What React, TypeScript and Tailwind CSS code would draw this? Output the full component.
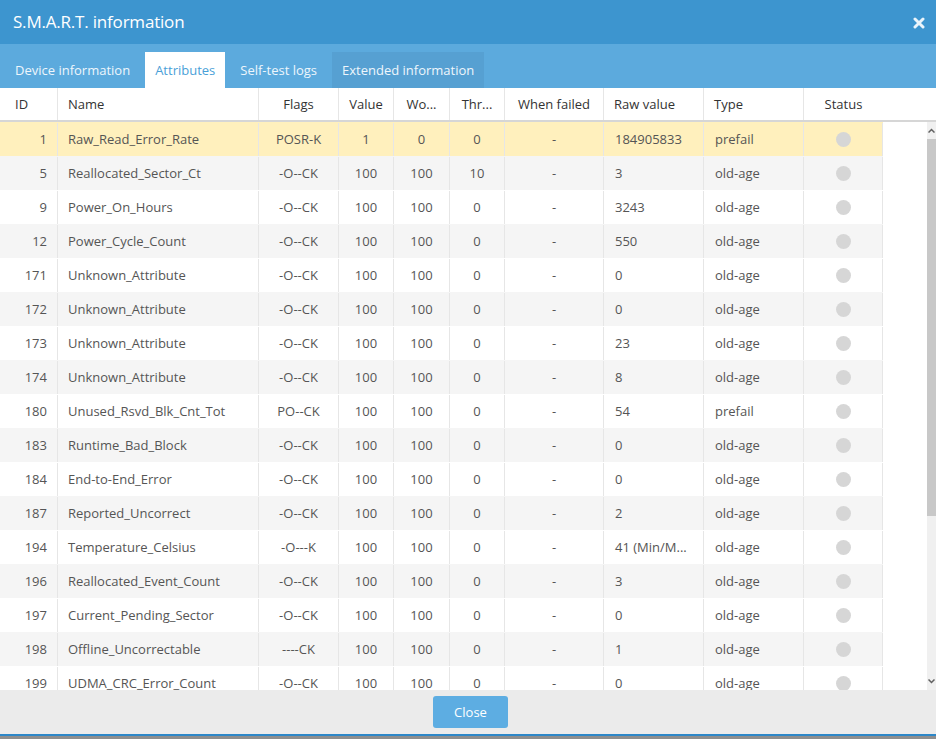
import React from 'react';

type Row = {
    id: number;
    name: string;
    flags: string;
    value: string;
    worst: string;
    thresh: string;
    raw: string;
    type: string;
};

const rows: Row[] = [
    { id: 1, name: 'Raw_Read_Error_Rate', flags: 'POSR-K', value: '1', worst: '0', thresh: '0', raw: '184905833', type: 'prefail' },
    { id: 5, name: 'Reallocated_Sector_Ct', flags: '-O--CK', value: '100', worst: '100', thresh: '10', raw: '3', type: 'old-age' },
    { id: 9, name: 'Power_On_Hours', flags: '-O--CK', value: '100', worst: '100', thresh: '0', raw: '3243', type: 'old-age' },
    { id: 12, name: 'Power_Cycle_Count', flags: '-O--CK', value: '100', worst: '100', thresh: '0', raw: '550', type: 'old-age' },
    { id: 171, name: 'Unknown_Attribute', flags: '-O--CK', value: '100', worst: '100', thresh: '0', raw: '0', type: 'old-age' },
    { id: 172, name: 'Unknown_Attribute', flags: '-O--CK', value: '100', worst: '100', thresh: '0', raw: '0', type: 'old-age' },
    { id: 173, name: 'Unknown_Attribute', flags: '-O--CK', value: '100', worst: '100', thresh: '0', raw: '23', type: 'old-age' },
    { id: 174, name: 'Unknown_Attribute', flags: '-O--CK', value: '100', worst: '100', thresh: '0', raw: '8', type: 'old-age' },
    { id: 180, name: 'Unused_Rsvd_Blk_Cnt_Tot', flags: 'PO--CK', value: '100', worst: '100', thresh: '0', raw: '54', type: 'prefail' },
    { id: 183, name: 'Runtime_Bad_Block', flags: '-O--CK', value: '100', worst: '100', thresh: '0', raw: '0', type: 'old-age' },
    { id: 184, name: 'End-to-End_Error', flags: '-O--CK', value: '100', worst: '100', thresh: '0', raw: '0', type: 'old-age' },
    { id: 187, name: 'Reported_Uncorrect', flags: '-O--CK', value: '100', worst: '100', thresh: '0', raw: '2', type: 'old-age' },
    { id: 194, name: 'Temperature_Celsius', flags: '-O---K', value: '100', worst: '100', thresh: '0', raw: '41 (Min/M...', type: 'old-age' },
    { id: 196, name: 'Reallocated_Event_Count', flags: '-O--CK', value: '100', worst: '100', thresh: '0', raw: '3', type: 'old-age' },
    { id: 197, name: 'Current_Pending_Sector', flags: '-O--CK', value: '100', worst: '100', thresh: '0', raw: '0', type: 'old-age' },
    { id: 198, name: 'Offline_Uncorrectable', flags: '----CK', value: '100', worst: '100', thresh: '0', raw: '1', type: 'old-age' },
    { id: 199, name: 'UDMA_CRC_Error_Count', flags: '-O--CK', value: '100', worst: '100', thresh: '0', raw: '0', type: 'old-age' },
];

const tabs = ['Device information', 'Attributes', 'Self-test logs', 'Extended information'];

const cell = 'h-full flex items-center border-r border-[#e6e6e6] shrink-0';

export default function App() {
    return (
        <div className="w-[936px] h-[739px] flex flex-col overflow-hidden bg-white font-['Open_Sans',sans-serif]">
            {/* title */}
            <div className="h-[44px] shrink-0 bg-[#3d95cf] flex items-center justify-between pl-[13px] pr-[11px]">
                <span className="text-white text-[17px] tracking-[-0.2px]">S.M.A.R.T. information</span>
                <svg width="12" height="12" viewBox="0 0 12 12" className="mt-[1px]">
                    <path d="M2 2 L10 10 M10 2 L2 10" stroke="#eaf4fb" strokeWidth="3" strokeLinecap="round" />
                </svg>
            </div>

            {/* tabs */}
            <div className="h-[44px] shrink-0 bg-[#5caadd] flex items-end">
                {tabs.map((t) => (
                    <div
                        key={t}
                        className={
                            'h-[36px] ml-[5px] px-[10px] pt-[1px] flex items-center text-[13px] ' +
                            (t === 'Attributes'
                                ? 'bg-white text-[#4a9fd8]'
                                : t === 'Extended information'
                                ? 'bg-[#56a0d2] text-[#eef6fc]'
                                : 'text-[#eef6fc]')
                        }
                    >
                        {t}
                    </div>
                ))}
            </div>

            {/* header */}
            <div className="h-[34px] shrink-0 flex border-b-2 border-[#d6d6d6] text-[13px] text-[#333]">
                <div className={cell + ' w-[58px] pl-[15px] pt-[2px]'}>ID</div>
                <div className={cell + ' w-[201px] pl-[10px] pt-[2px]'}>Name</div>
                <div className={cell + ' w-[80px] justify-center pt-[2px]'}>Flags</div>
                <div className={cell + ' w-[55px] justify-center pt-[2px]'}>Value</div>
                <div className={cell + ' w-[56px] justify-center pt-[2px]'}>Wo...</div>
                <div className={cell + ' w-[55px] justify-center pt-[2px]'}>Thr...</div>
                <div className={cell + ' w-[99px] justify-center pt-[2px]'}>When failed</div>
                <div className={cell + ' w-[100px] pl-[10px] pt-[2px]'}>Raw value</div>
                <div className={cell + ' w-[100px] pl-[10px] pt-[2px]'}>Type</div>
                <div className="h-full flex items-center shrink-0 w-[79px] justify-center pt-[2px]">Status</div>
            </div>

            {/* body */}
            <div className="h-[568px] shrink-0 flex">
                <div className="w-[883px] overflow-hidden text-[13px] text-[#555]">
                    {rows.map((r, i) => (
                        <div
                            key={r.id}
                            className={
                                'h-[34px] flex pt-[1px] ' +
                                (i === 0 ? 'bg-[#fff0bd]' : i % 2 === 1 ? 'bg-[#f5f5f5]' : 'bg-white')
                            }
                        >
                            <div className={cell + ' w-[58px] justify-end pr-[10px]'}>{r.id}</div>
                            <div className={cell + ' w-[201px] pl-[10px]'}>{r.name}</div>
                            <div className={cell + ' w-[80px] justify-center'}>{r.flags}</div>
                            <div className={cell + ' w-[55px] justify-center'}>{r.value}</div>
                            <div className={cell + ' w-[56px] justify-center'}>{r.worst}</div>
                            <div className={cell + ' w-[55px] justify-center'}>{r.thresh}</div>
                            <div className={cell + ' w-[99px] justify-center'}>-</div>
                            <div className={cell + ' w-[100px] pl-[11px]'}>{r.raw}</div>
                            <div className={cell + ' w-[100px] pl-[11px]'}>{r.type}</div>
                            <div className={cell + ' w-[79px] justify-center'}>
                                <span className="w-[15px] h-[15px] rounded-full bg-[#d6d6d6]" />
                            </div>
                        </div>
                    ))}
                </div>
                <div className="w-[44px] bg-white" />
                {/* scrollbar */}
                <div className="w-[9px] flex flex-col bg-[#f0f0f0]">
                    <div className="h-[17px] flex items-center justify-center">
                        <svg width="7" height="5" viewBox="0 0 7 5">
                            <path d="M0.5 4.5 L3.5 1.5 L6.5 4.5" stroke="#606060" strokeWidth="1.5" fill="none" />
                        </svg>
                    </div>
                    <div className="h-[377px] bg-[#c8c8c8]" />
                    <div className="flex-1" />
                    <div className="h-[17px] flex items-center justify-center">
                        <svg width="7" height="5" viewBox="0 0 7 5">
                            <path d="M0.5 0.5 L3.5 3.5 L6.5 0.5" stroke="#606060" strokeWidth="1.5" fill="none" />
                        </svg>
                    </div>
                </div>
            </div>

            {/* footer */}
            <div className="h-[44px] shrink-0 bg-[#ebebeb] flex items-start justify-center pt-[6px]">
                <button className="w-[75px] h-[32px] ml-[5px] pt-[1px] rounded-[3px] bg-[#5dade2] text-white text-[13px]">Close</button>
            </div>
            <div className="h-[2px] shrink-0 bg-[#2d87c8]" />
            <div className="flex-1 bg-[#8e8e8e]" />
        </div>
    );
}
